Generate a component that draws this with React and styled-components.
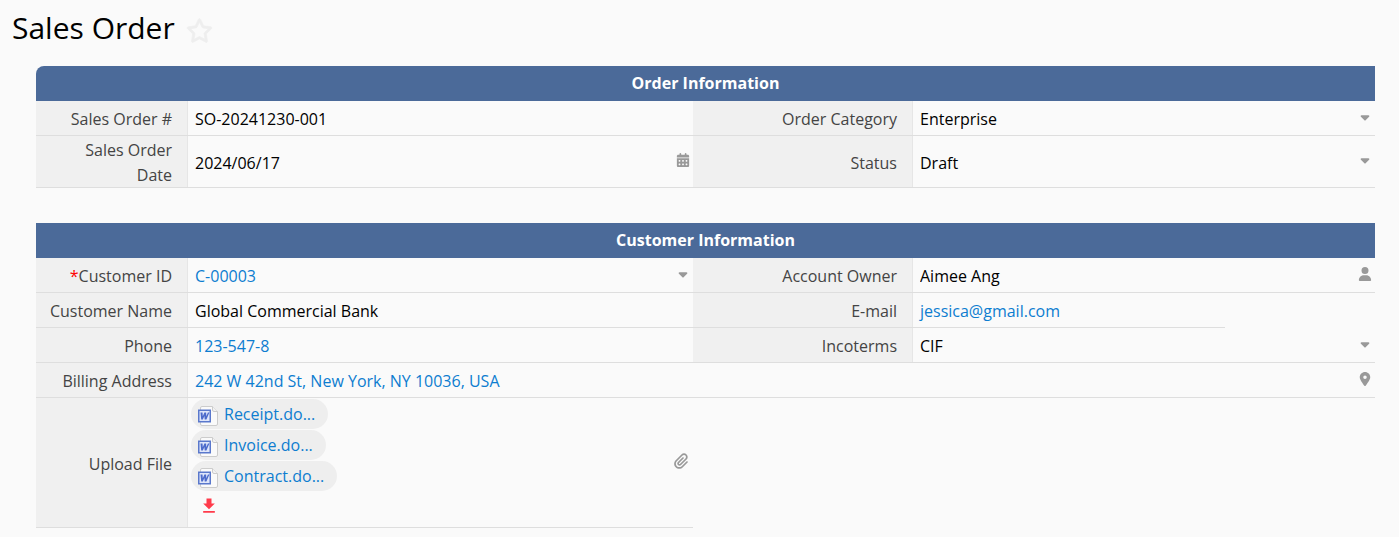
import styled, { createGlobalStyle, css } from 'styled-components';
import {
  FaCalendarDays,
  FaCaretDown,
  FaLocationDot,
  FaPaperclip,
  FaRegStar,
  FaUser,
} from 'react-icons/fa6';
import { MdDownload } from 'react-icons/md';

const GlobalStyle = createGlobalStyle`
  * {
    box-sizing: border-box;
  }

  body {
    margin: 0;
    background: #fafafa;
    color: #000000;
    font-family: 'Open Sans', 'Noto Sans', sans-serif;
    font-size: 16px;
    line-height: 25px;
  }
`;

const Page = styled.main`
  padding: 8px 24px 8px 12px;
`;

const TitleBar = styled.header`
  display: flex;
  align-items: center;
  gap: 11px;
  height: 40px;
`;

const Title = styled.h1`
  margin: 0;
  font-size: 30px;
  font-weight: 400;
  line-height: 40px;
`;

const StarButton = styled.button`
  display: flex;
  padding: 4px 0 0;
  border: 0;
  background: none;
  color: #eeeeee;
  font-size: 27px;
  cursor: pointer;

  svg {
    stroke-width: 14px;
  }
`;

const Form = styled.form`
  display: flex;
  flex-direction: column;
  gap: 35px;
  margin: 18px 0 0 24px;
`;

const Section = styled.section`
  display: grid;
  grid-template-columns: 152px minmax(0, 505fr) 220px minmax(0, 462fr);
`;

const SectionTitle = styled.h2`
  grid-column: 1 / -1;
  margin: 0;
  padding: 5px;
  border-radius: ${({ $rounded }) => ($rounded ? '8px 0 0 0' : '0')};
  background: #4b6a99;
  color: #ffffff;
  font-size: 16px;
  font-weight: 700;
  line-height: 25px;
  text-align: center;
`;

const LabelCell = styled.div`
  display: flex;
  align-items: center;
  justify-content: flex-end;
  min-height: 35px;
  padding: 2px 16px 0 10px;
  background: #f0f0f0;
  box-shadow: inset 0 -1px #dedede, inset -1px 0 #e6e6e6;
  color: #444444;
  text-align: right;
`;

const Required = styled.span`
  color: #ff0000;
`;

const ValueCell = styled.div`
  display: flex;
  align-items: center;
  grid-column: span ${({ $span }) => $span || 1};
  width: ${({ $width }) => $width || 'auto'};
  min-width: 0;
  padding: 2px 3px 0 7px;
  box-shadow: inset 0 -1px #dedede;
`;

const control = css`
  flex: 1;
  min-width: 0;
  height: 25px;
  margin: 0;
  padding: 0;
  border: 0;
  outline: 0;
  background: none;
  color: ${({ $link }) => ($link ? '#0d7dd0' : '#000000')};
  font: inherit;
`;

const TextInput = styled.input`
  ${control}
`;

const Select = styled.select`
  ${control}
  appearance: none;
`;

const ValueLink = styled.a`
  flex: 1;
  color: #0d7dd0;
  text-decoration: none;
`;

const CellIcon = styled.span`
  display: flex;
  justify-content: center;
  width: 14px;
  padding-bottom: 6px;
  color: #999999;
  font-size: 14px;
  pointer-events: none;
`;

const IconButton = styled.button`
  display: flex;
  justify-content: center;
  width: ${({ $width }) => $width || 14}px;
  padding: 0 0 6px;
  border: 0;
  background: none;
  color: #999999;
  font-size: ${({ $size }) => $size || 14}px;
  cursor: pointer;
`;

const UploadCell = styled(ValueCell)`
  padding: 1px 3px 0;
`;

const FileList = styled.div`
  display: flex;
  flex: 1;
  flex-direction: column;
  align-items: flex-start;
  gap: 1px;
  padding-bottom: 8px;
`;

const FileChip = styled.a`
  display: flex;
  align-items: center;
  gap: 6px;
  height: 30px;
  padding: 0 13px 0 7px;
  border-radius: 15px;
  background: #eeeeee;
  color: #0d7dd0;
  text-decoration: none;

  svg {
    margin-top: 4px;
  }
`;

const DownloadButton = styled.button`
  display: flex;
  align-items: center;
  height: 28px;
  padding: 0 0 0 8px;
  border: 0;
  background: none;
  color: #ff3b4b;
  font-size: 20px;
  cursor: pointer;
`;

function WordIcon() {
  return (
    <svg width="20" height="20" viewBox="0 0 20 20" aria-hidden="true">
      <path
        d="M4 .5h10.5l5 5V18a1.500 1.500 0 0 1-1.500 1.500H4A1.500 1.500 0 0 1 2.500 18V2A1.500 1.500 0 0 1 4 .5z"
        fill="#fafafa"
        stroke="#cccccc"
      />
      <path d="M14.500 .5V4a1.500 1.500 0 0 0 1.500 1.500h3.500" fill="#f2f2f2" stroke="#cccccc" />
      <rect x=".75" y="4.250" width="11.500" height="11.500" fill="#dfe6fa" stroke="#5a78cc" strokeWidth="1.500" />
      <path
        d="M2.500 6.500h2l.3 3.800 1.600-3.800h1.700l.3 3.800 1.500-3.800h1.500l-3 7H6.700l-.3-3.600-1.600 3.600H3.200z"
        fill="#4d6bcb"
      />
    </svg>
  );
}

function Label({ htmlFor, required, children }) {
  return (
    <LabelCell>
      <label htmlFor={htmlFor}>
        {required && <Required>*</Required>}
        {children}
      </label>
    </LabelCell>
  );
}

function TextField({ id, label, value, icon }) {
  return (
    <>
      <Label htmlFor={id}>{label}</Label>
      <ValueCell>
        <TextInput id={id} type="text" defaultValue={value} />
        {icon}
      </ValueCell>
    </>
  );
}

function SelectField({ id, label, value, required, link }) {
  return (
    <>
      <Label htmlFor={id} required={required}>{label}</Label>
      <ValueCell>
        <Select id={id} defaultValue={value} $link={link}>
          <option>{value}</option>
        </Select>
        <CellIcon><FaCaretDown /></CellIcon>
      </ValueCell>
    </>
  );
}

function LinkField({ id, label, value, href, span, width, icon }) {
  return (
    <>
      <Label htmlFor={id}>{label}</Label>
      <ValueCell $span={span} $width={width}>
        <ValueLink id={id} href={href}>{value}</ValueLink>
        {icon}
      </ValueCell>
    </>
  );
}

const files = ['Receipt.do...', 'Invoice.do...', 'Contract.do...'];

function App() {
  return (
    <Page>
      <GlobalStyle />
      <TitleBar>
        <Title>Sales Order</Title>
        <StarButton type="button" aria-label="Add to favorites"><FaRegStar /></StarButton>
      </TitleBar>

      <Form>
        <Section>
          <SectionTitle $rounded>Order Information</SectionTitle>
          <TextField id="order-no" label="Sales Order #" value="SO-20241230-001" />
          <SelectField id="category" label="Order Category" value="Enterprise" />
          <TextField
            id="order-date"
            label="Sales Order Date"
            value="2024/06/17"
            icon={<IconButton type="button" aria-label="Pick a date"><FaCalendarDays /></IconButton>}
          />
          <SelectField id="status" label="Status" value="Draft" />
        </Section>

        <Section>
          <SectionTitle>Customer Information</SectionTitle>
          <SelectField id="customer-id" label="Customer ID" value="C-00003" required link />
          <TextField
            id="owner"
            label="Account Owner"
            value="Aimee Ang"
            icon={<IconButton type="button" aria-label="Pick a user"><FaUser /></IconButton>}
          />
          <TextField id="customer-name" label="Customer Name" value="Global Commercial Bank" />
          <LinkField
            id="email"
            label="E-mail"
            value="jessica@gmail.com"
            href="mailto:jessica@gmail.com"
            width="calc(100% - 150px)"
          />
          <LinkField id="phone" label="Phone" value="123-547-8" href="tel:123-547-8" />
          <SelectField id="incoterms" label="Incoterms" value="CIF" />
          <LinkField
            id="address"
            label="Billing Address"
            value="242 W 42nd St, New York, NY 10036, USA"
            href="#address"
            span={3}
            icon={<IconButton type="button" aria-label="Show on map"><FaLocationDot /></IconButton>}
          />
          <Label htmlFor="upload">Upload File</Label>
          <UploadCell>
            <FileList>
              {files.map((name) => (
                <FileChip key={name} href="#file">
                  <WordIcon />
                  {name}
                </FileChip>
              ))}
              <DownloadButton type="button" aria-label="Download all"><MdDownload /></DownloadButton>
            </FileList>
            <IconButton id="upload" type="button" aria-label="Attach a file" $size={16} $width={18}>
              <FaPaperclip />
            </IconButton>
          </UploadCell>
        </Section>
      </Form>
    </Page>
  );
}

export default App;
